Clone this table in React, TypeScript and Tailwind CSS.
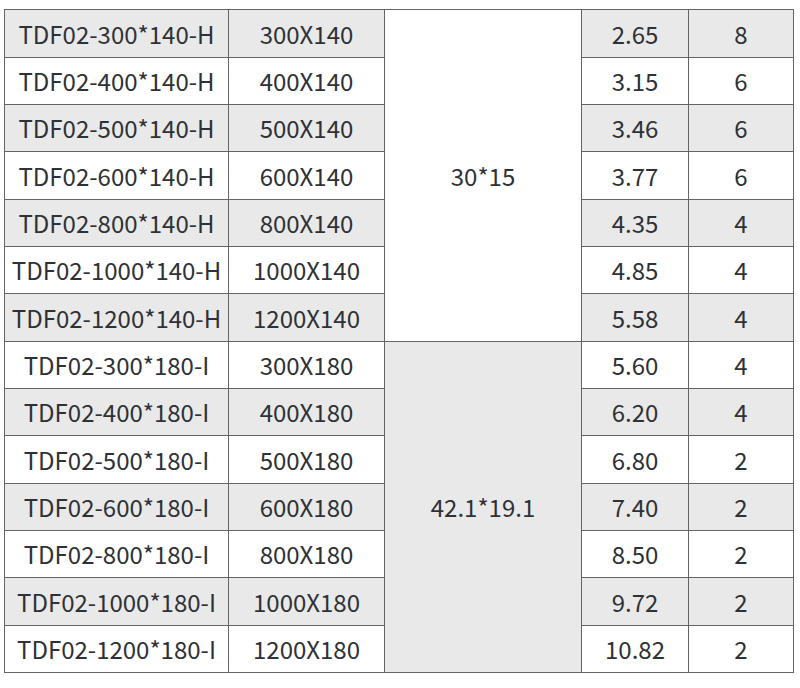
import React from "react";

const rows1 = [
  ["TDF02-300*140-H", "300X140", "2.65", "8"],
  ["TDF02-400*140-H", "400X140", "3.15", "6"],
  ["TDF02-500*140-H", "500X140", "3.46", "6"],
  ["TDF02-600*140-H", "600X140", "3.77", "6"],
  ["TDF02-800*140-H", "800X140", "4.35", "4"],
  ["TDF02-1000*140-H", "1000X140", "4.85", "4"],
  ["TDF02-1200*140-H", "1200X140", "5.58", "4"],
];
const rows2 = [
  ["TDF02-300*180-I", "300X180", "5.60", "4"],
  ["TDF02-400*180-I", "400X180", "6.20", "4"],
  ["TDF02-500*180-I", "500X180", "6.80", "2"],
  ["TDF02-600*180-I", "600X180", "7.40", "2"],
  ["TDF02-800*180-I", "800X180", "8.50", "2"],
  ["TDF02-1000*180-I", "1000X180", "9.72", "2"],
  ["TDF02-1200*180-I", "1200X180", "10.82", "2"],
];

const cell = "border border-[#646464] text-center p-0";

export default function App() {
  const all = [...rows1, ...rows2];
  return (
    <div className="w-[800px] h-[688px] bg-white pt-[9px] pl-[4px]">
      <table
        className="border-collapse text-[#2e3136] text-[24px] leading-none"
        style={{ fontFamily: '"Noto Sans CJK SC", "Noto Sans", sans-serif' }}
      >
        <colgroup>
          <col className="w-[224px]" />
          <col className="w-[156px]" />
          <col className="w-[197px]" />
          <col className="w-[107px]" />
          <col className="w-[105px]" />
        </colgroup>
        <tbody>
          {all.map((r, i) => {
            const bg = i % 2 === 0 ? "bg-[#e9e9e9]" : "bg-white";
            return (
              <tr key={i} className={i % 3 === 0 ? "h-[48px]" : "h-[47px]"}>
                <td className={`${cell} ${bg}`}>{r[0]}</td>
                <td className={`${cell} ${bg}`}>{r[1]}</td>
                {i === 0 && (
                  <td rowSpan={7} className={`${cell} bg-white`}>
                    30*15
                  </td>
                )}
                {i === 7 && (
                  <td rowSpan={7} className={`${cell} bg-[#e9e9e9]`}>
                    42.1*19.1
                  </td>
                )}
                <td className={`${cell} ${bg}`}>{r[2]}</td>
                <td className={`${cell} ${bg}`}>{r[3]}</td>
              </tr>
            );
          })}
        </tbody>
      </table>
    </div>
  );
}
